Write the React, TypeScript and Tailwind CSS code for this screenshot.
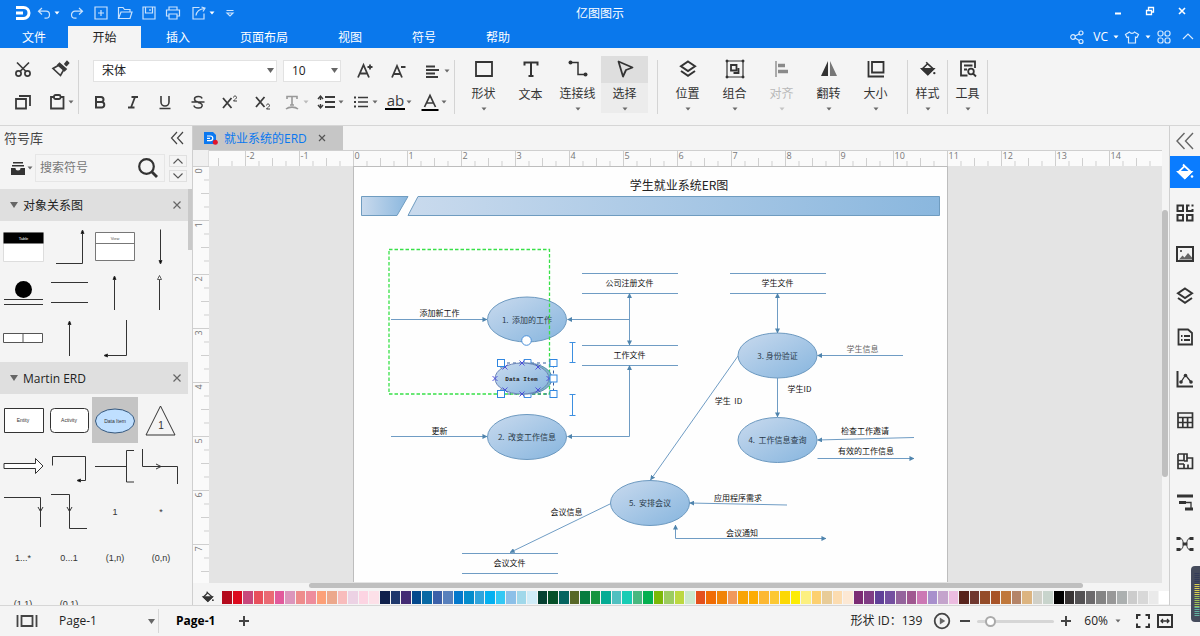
import type { ReactNode } from 'react';

type IconProps = { children: ReactNode; size?: string; sw?: number; box?: string };

function Icon({ children, size = 'size-5', sw = 2, box = '0 0 20 20' }: IconProps) {
  return (
    <svg
      viewBox={box}
      className={`${size} shrink-0`}
      fill="none"
      stroke="currentColor"
      strokeWidth={sw}
      aria-hidden="true"
    >
      {children}
    </svg>
  );
}

function Caret({ className = 'text-[#6a6a6a]' }: { className?: string }) {
  return (
    <svg viewBox="0 0 8 8" className={`size-2 shrink-0 ${className}`} aria-hidden="true">
      <path d="M1.500 2.500h5L4 5.500z" fill="currentColor" />
    </svg>
  );
}

const Bucket = () => (
  <>
    <path d="M8 2.500l2 2L16 10l-6.200 6L3.500 10l5.500-5.300" strokeWidth="1.800" />
    <path d="M3.500 10H16l-6.200 6z" fill="currentColor" />
    <circle cx="17" cy="14.500" r="1.300" fill="currentColor" stroke="none" />
  </>
);

const Layers = () => (
  <>
    <path d="M10 2.500l7 4.800-7 4.700-7-4.700z" />
    <path d="M3 12l7 4.800 7-4.800" />
  </>
);

/* ---------- Title bar ---------- */

function TitleBar() {
  const btn = 'flex h-6 w-6 items-center justify-center';
  return (
    <div className="grid h-[26px] grid-cols-[1fr_auto_1fr] items-center text-[#c9e2fd]">
      <div className="flex items-center pl-3">
        <svg viewBox="0 0 20 20" className="size-5 text-white" fill="none" stroke="currentColor" strokeWidth="3" aria-label="Edraw" role="img">
          <path d="M4 4.500h7.500a5.500 5.500 0 0 1 0 11H4M4 10h7" />
        </svg>
        <button aria-label="撤销" className="ml-1 flex w-[29px] items-center">
          <Icon size="size-4" sw={1.2} box="0 0 16 16"><path d="M6 3L2.500 6.200 6 9.500M2.500 6.200H10a3.500 3.500 0 0 1 0 7H8.500" /></Icon>
          <Caret className="ml-px text-white" />
        </button>
        <button aria-label="恢复" className={btn}>
          <Icon size="size-4" sw={1.2} box="0 0 16 16"><path d="M10 3l3.500 3.200L10 9.500M13.500 6.200H6a3.500 3.500 0 0 0 0 7h1.500" /></Icon>
        </button>
        <button aria-label="新建" className={btn}>
          <Icon size="size-4" sw={1.2} box="0 0 16 16"><path d="M2 2h12v12H2zM8 5v6M5 8h6" /></Icon>
        </button>
        <button aria-label="打开" className={btn}>
          <Icon size="size-4" sw={1.2} box="0 0 16 16"><path d="M1.500 13.500v-11h4.500l1.500 2h5.500v2.500M1.500 13.500L4 7h11l-2 6.500z" /></Icon>
        </button>
        <button aria-label="保存" className={btn}>
          <Icon size="size-4" sw={1.2} box="0 0 16 16"><path d="M2 2h12v12H2zM4.500 2v6h7V2M9 4v2" /></Icon>
        </button>
        <button aria-label="打印" className={btn}>
          <Icon size="size-4" sw={1.2} box="0 0 16 16"><path d="M4 5V2h8v3M4 11H1.500V5h13v6H12M4 9h8v5H4z" /></Icon>
        </button>
        <button aria-label="导出" className="ml-1.5 flex w-[31px] items-center">
          <Icon size="size-4" sw={1.2} box="0 0 16 16"><path d="M8.500 2.500H2v11.500h11V8.500M5 10.500c.5-4 3.500-6.500 8.500-7M10.500 2l3.500 1.200-2 3.300" /></Icon>
          <Caret className="ml-px text-white" />
        </button>
        <button aria-label="自定义快速访问" className="flex w-4 justify-center">
          <Icon size="size-3" sw={1.2} box="0 0 12 12"><path d="M2.500 3.500h7M3 6h6L6 9z" /></Icon>
        </button>
      </div>
      <h1 className="pt-px text-xs text-white">亿图图示</h1>
      <div className="flex h-[22px] items-center justify-end gap-4 self-start pr-2.5 text-white">
        <button aria-label="最小化" className="flex w-4 justify-center"><Icon size="size-3" sw={2} box="0 0 12 12"><path d="M3 8.500h6" /></Icon></button>
        <button aria-label="还原" className="flex w-4 justify-center"><Icon size="size-3" sw={1.3} box="0 0 12 12"><path d="M2.500 5.500h5v4h-5zM4.500 5V2.500h5v4.500H8" /></Icon></button>
        <button aria-label="关闭" className="flex w-4 justify-center"><Icon size="size-3" sw={1.6} box="0 0 12 12"><path d="M3 3l6 6M9 3L3 9" /></Icon></button>
      </div>
    </div>
  );
}

const menus = ['插入', '页面布局', '视图', '符号', '帮助'];

function MenuTabs() {
  return (
    <nav className="flex h-[22px] items-stretch justify-between text-xs text-white">
      <div className="flex">
        <button className="w-[68px] pt-px">文件</button>
        <button className="w-[73px] bg-[#f4f4f4] pt-px text-[#222]">开始</button>
        {menus.map((m) => (
          <button key={m} className="px-[25px] pt-px">{m}</button>
        ))}
      </div>
      <div className="flex items-center pr-1 text-[#d9ebfe]">
        <button aria-label="分享">
          <Icon size="size-4" sw={1.2} box="0 0 16 16">
            <circle cx="4" cy="8" r="2.300" /><circle cx="12" cy="4" r="2" /><circle cx="12" cy="12.500" r="2" />
            <path d="M6 7l4.200-2M6 9l4.200 2.500" />
          </Icon>
        </button>
        <button className="ml-2 flex items-center gap-1 text-xs text-white">VC<Caret className="text-white" /></button>
        <button aria-label="主题" className="ml-1 flex items-center">
          <Icon size="size-4" sw={1.2} box="0 0 16 16"><path d="M5.500 3L1.500 5.500 3 8.500l1.500-.5v6h7V8l1.500.5 1.500-3-4-2.500c-1 1.800-4 1.800-5 0z" /></Icon>
          <Caret className="ml-1 text-white" />
        </button>
        <button aria-label="应用" className="ml-1">
          <Icon size="size-4" sw={1.2} box="0 0 16 16">
            <rect x="2" y="2" width="5" height="5" rx="2" /><rect x="9" y="2" width="5" height="5" rx="2" />
            <rect x="2" y="9" width="5" height="5" rx="2" /><rect x="9" y="9" width="5" height="5" rx="2" />
          </Icon>
        </button>
        <button aria-label="收起功能区" className="ml-2"><Icon size="size-4" sw={1.2} box="0 0 16 16"><path d="M3 10l5-5 5 5" /></Icon></button>
      </div>
    </nav>
  );
}

/* ---------- Ribbon ---------- */

function Divider() {
  return <div className="mt-3 h-[54px] w-px shrink-0 bg-[#d4d4d4]" />;
}

function BigButton({ label, icon, active, muted, noCaret, narrow }: {
  label: string; icon: ReactNode; active?: boolean; muted?: boolean; noCaret?: boolean; narrow?: boolean;
}) {
  return (
    <button
      className={`mt-2 flex h-[57px] flex-col items-center ${narrow ? 'w-[39px]' : 'w-[47px]'} ${active ? 'bg-[#ececec]' : ''} ${muted ? 'text-[#b8b8b8]' : 'text-[#333]'}`}
    >
      <span className={`flex h-7 w-full items-center justify-center pb-0.5 ${active ? 'bg-[#dedede]' : ''}`}>{icon}</span>
      <span className="text-xs leading-[22px]">{label}</span>
      {!noCaret && <Caret className={muted ? 'text-[#c4c4c4]' : 'text-[#6a6a6a]'} />}
    </button>
  );
}

function FontGroup() {
  const fmt = 'flex flex-1 items-center justify-center';
  return (
    <div className="w-[375px] shrink-0 pt-[7px] text-[#3a3a3a]">
      <div className="flex h-[31px] items-center pl-[14px]">
        <span className="relative flex">
          <select aria-label="字体" defaultValue="宋体" className="h-[22px] w-[184px] appearance-none border border-[#e2e2e2] bg-white pl-2 text-xs text-[#222]">
            <option>宋体</option>
          </select>
          <svg viewBox="0 0 8 6" className="pointer-events-none absolute top-2 right-0.5 h-1.5 w-2"><path d="M0 0h7L3.500 5z" fill="#666" /></svg>
        </span>
        <span className="relative ml-1.5 flex">
          <select aria-label="字号" defaultValue="10" className="h-[22px] w-[58px] appearance-none border border-[#e2e2e2] bg-white pl-2 text-xs text-[#222]">
            <option>10</option>
          </select>
          <svg viewBox="0 0 8 6" className="pointer-events-none absolute top-2 right-0.5 h-1.5 w-2"><path d="M0 0h7L3.500 5z" fill="#666" /></svg>
        </span>
        <button aria-label="增大字号" className="ml-2 flex w-8 justify-center">
          <Icon sw={1.8}><path d="M3 16.500L8.500 4 14 16.500M5 12.500h7M12.500 6h5M15 3.500v5" /></Icon>
        </button>
        <button aria-label="减小字号" className="flex w-[34px] justify-center">
          <Icon sw={1.8}><path d="M4 16.500L9 5l5 11.500M6 13h6M13 6h4.500" /></Icon>
        </button>
        <button aria-label="对齐方式" className="flex w-[36px] items-center justify-end">
          <Icon><path d="M3 5.500h9M3 9h13M3 12.500h9M3 16h12" strokeWidth="1.800" /></Icon><Caret />
        </button>
      </div>
      <div className="flex h-[31px] pl-[5px]">
        <div className="flex w-[195px]">
          <button aria-label="粗体" className={fmt}><Icon><path d="M6 5h5a2.500 2.500 0 0 1 0 5H6zM6 10h6a2.800 2.800 0 0 1 0 5.500H6z" /></Icon></button>
          <button aria-label="斜体" className={fmt}><Icon sw={1.8}><path d="M8.500 5H15M5 15.500h6.500M12 5L8 15.500" /></Icon></button>
          <button aria-label="下划线" className={fmt}><Icon sw={1.6}><path d="M6 4v6a4 4 0 0 0 8 0V4M4.500 16.500h11" /></Icon></button>
          <button aria-label="删除线" className={fmt}><Icon sw={1.5}><path d="M14 6.500C13.500 3.800 6.500 3.800 6.500 7c0 1.500 1 2.500 3.500 3M10 10.500c7 1.500 4 6 0 5.500-2.500 0-3.800-1-4-2.500M3.500 10h13" /></Icon></button>
          <button aria-label="上标" className={fmt}><Icon sw={1.8}><path d="M3 6l8.500 10M11.500 6L3 16" /><path d="M13.500 5.500c0-2 3-2 3 0 0 1.200-2 2-3 3.500h3.500" strokeWidth="1" /></Icon></button>
          <button aria-label="下标" className={fmt}><Icon sw={1.8}><path d="M3 5l8.500 10M11.500 5L3 15" /><path d="M13.500 13.500c0-2 3-2 3 0 0 1.200-2 2-3 3.500h3.500" strokeWidth="1" /></Icon></button>
        </div>
        <div className="flex w-[172px]">
          <button aria-label="文字效果" className={`${fmt} text-[#999]`}><Icon sw={1.6}><path d="M5 7V4.500h10V7M10 4.500v8.500M8 13h4M4 17c3-2.500 9-2.500 12 0" /></Icon><Caret className="text-[#bbb]" /></button>
          <button aria-label="行距" className={fmt}><Icon><path d="M8 5h10M8 10h10M8 15h10" strokeWidth="1.800" /><path d="M3.500 5v3M3.500 12v3M1 7l2.500-3L6 7M1 13l2.500 3L6 13" strokeWidth="1.400" /></Icon><Caret /></button>
          <button aria-label="项目符号" className={fmt}><Icon><path d="M7 5.500h10M7 10h10M7 14.500h10" strokeWidth="1.700" /><path d="M3 5.500h2M3 10h2M3 14.500h2" strokeWidth="2" /></Icon><Caret /></button>
          <button aria-label="突出显示" className={fmt}>
            <span className="flex w-5 flex-col items-center border-b-2 border-black text-[15px] leading-[15px]">ab</span><Caret />
          </button>
          <button aria-label="字体颜色" className={fmt}><Icon sw={1.7}><path d="M4.500 15L10 3.500 15.500 15M6.500 11h7" /><path d="M1.500 18h17" stroke="#000" strokeWidth="2" /></Icon><Caret /></button>
        </div>
      </div>
    </div>
  );
}

function Ribbon() {
  return (
    <div className="flex h-[78px] shrink-0 border-b border-[#d6d6d6] bg-[#f4f4f4]">
      <div className="w-[78px] shrink-0 pt-[7px] pl-[13px] text-[#3a3a3a]">
        <div className="flex h-[31px] items-center gap-[17px] pb-1">
          <button aria-label="剪切"><Icon sw={1.7}><circle cx="5.500" cy="14.500" r="2.600" /><circle cx="14.500" cy="14.500" r="2.600" /><path d="M4 3.500l9 9M16 3.500l-9 9" /></Icon></button>
          <button aria-label="格式刷">
            <Icon sw={1.7}><path d="M10 5.500L3 9.500l7.500 7 4-7z" /><path d="M9.500 4.500L16 10l-1.500 1.500L8 6zM14.500 5.500l2.500-3 1.500 1.500-2.500 3" fill="currentColor" /></Icon>
          </button>
        </div>
        <div className="flex h-[31px] items-center gap-[14px]">
          <button aria-label="复制"><Icon sw={1.8}><path d="M3 7h10v9.500H3zM6 4h11v10" /></Icon></button>
          <button aria-label="粘贴" className="flex items-center"><Icon sw={1.8}><path d="M7 5H4v11.500h12.500V5H14" /><rect x="7" y="3" width="6.500" height="4" rx="1.500" /></Icon><Caret /></button>
        </div>
      </div>
      <Divider />
      <FontGroup />
      <Divider />
      <div className="flex px-[5px]">
        <BigButton label="形状" icon={<Icon sw={1.8}><path d="M2 3h16v14H2z" /></Icon>} />
        <BigButton label="文本" noCaret icon={<Icon sw={2}><path d="M3.500 6.500V3.500h13v3M10 3.500V17M7.500 17h5" /></Icon>} />
        <BigButton label="连接线" icon={<Icon sw={1.5}><path d="M3 3.500h7v12h7" /><circle cx="2.500" cy="3.500" r="2" fill="currentColor" stroke="none" /><circle cx="17.500" cy="15.500" r="2" fill="currentColor" stroke="none" /></Icon>} />
        <BigButton label="选择" active icon={<Icon sw={1.8}><path d="M3.500 2.500L17.500 8.500 11 11 8 17.500z" strokeLinejoin="round" /></Icon>} />
      </div>
      <div className="w-1" />
      <Divider />
      <div className="flex pr-2 pl-[6px]">
        <BigButton label="位置" icon={<Icon><Layers /></Icon>} />
        <BigButton label="组合" icon={<Icon sw={1.2}><path d="M2 2h16v16H2z" /><path d="M6 6h5.500v5.500H6zM13.500 9v5h-5" strokeWidth="1.800" /><path d="M1 1h2v2H1zM17 1h2v2h-2zM1 17h2v2H1zM17 17h2v2h-2z" fill="currentColor" strokeWidth=".6" /></Icon>} />
        <BigButton label="对齐" muted icon={<Icon><path d="M4 2v16" stroke="#999" strokeWidth="1.600" /><path d="M6 6.500h7M6 12.500h10" stroke="#8a8a8a" strokeWidth="3.500" /></Icon>} />
        <BigButton label="翻转" icon={<Icon><path d="M9 2v15H2z" fill="#333" stroke="none" /><path d="M11 2v15h7z" fill="#777" stroke="none" /></Icon>} />
        <BigButton label="大小" icon={<Icon sw={1.8}><path d="M6 3h11.500v10.500H6zM2.500 2v15.500H18" /></Icon>} />
      </div>
      <Divider />
      <BigButton label="样式" narrow icon={<Icon size="size-[18px]"><Bucket /></Icon>} />
      <Divider />
      <BigButton label="工具" narrow icon={<Icon sw={1.8}><path d="M9.500 16.500H3V2.500h14V9M6 6.500h8.500M6 10.500h3" /><circle cx="13" cy="12.500" r="2.800" /><path d="M15 14.500l3 3" /></Icon>} />
      <Divider />
    </div>
  );
}

/* ---------- Symbol library ---------- */

function Cell({ children, active }: { children: ReactNode; active?: boolean }) {
  return (
    <button className={`size-[46px] ${active ? 'bg-[#c4c4c4]' : ''}`}>
      <svg viewBox="0 0 46 46" className="size-full font-['Liberation_Sans',sans-serif]" fill="none" stroke="#333" strokeWidth="1">
        {children}
      </svg>
    </button>
  );
}

function CellText({ children, y = 26, size = 9 }: { children: string; y?: number; size?: number }) {
  return <text x="23" y={y} fontSize={size} fill="#333" stroke="none" textAnchor="middle">{children}</text>;
}

function SectionHeader({ title }: { title: string }) {
  return (
    <div className="flex h-8 shrink-0 items-center bg-[#dfdfdf] pr-[5px] pl-2.5 text-[#222]">
      <svg viewBox="0 0 8 6" className="h-1.5 w-2"><path d="M0 0h8L4 6z" fill="#666" /></svg>
      <h3 className="ml-[5px] flex-1 pt-px text-xs">{title}</h3>
      <button aria-label={`关闭 ${title}`} className="text-[#666]"><Icon size="size-3" sw={1.2} box="0 0 12 12"><path d="M2.500 2.500l7 7M9.500 2.500l-7 7" /></Icon></button>
    </div>
  );
}

const labels = ['1...*', '0...1', '(1,n)', '(0,n)', '(1,1)', '(0,1)'];

function SymbolPanel() {
  return (
    <aside className="flex w-[193px] shrink-0 flex-col overflow-hidden border-r border-[#cfcfcf] bg-[#f4f4f4]">
      <div className="flex h-6 shrink-0 items-center justify-between pr-2 pl-1 text-[#444]">
        <h2 className="pt-px text-[13px]">符号库</h2>
        <button aria-label="折叠"><Icon size="size-3.5" sw={1.2} box="0 0 14 14"><path d="M7 1L1.500 7 7 13M13 1L7.500 7 13 13" /></Icon></button>
      </div>
      <div className="mt-1 mb-[7px] flex h-7 shrink-0 items-center pl-2.5">
        <button aria-label="符号库菜单" className="flex items-center text-[#333]">
          <svg viewBox="0 0 16 16" className="size-4" fill="currentColor"><path d="M3 2h10v1.500H3zM2 5h12v1.500H2zM1 8h4.500a2.500 2.500 0 0 0 5 0H15v7H1z" /></svg>
          <Caret />
        </button>
        <div className="ml-px flex h-7 w-[130px] items-center border border-[#e6e6e6]">
          <input aria-label="搜索符号" placeholder="搜索符号" className="w-0 flex-1 bg-transparent pl-1 text-xs outline-none placeholder:text-[#777]" />
          <button aria-label="搜索" className="mr-[5px] text-[#333]"><Icon size="size-[22px]" box="0 0 22 22"><circle cx="9.500" cy="9.500" r="7.300" strokeWidth="2.200" /><path d="M15 15l5 5" strokeWidth="2.800" /></Icon></button>
        </div>
        <div className="ml-1 flex flex-col gap-[3px] text-[#555]">
          <button aria-label="上一个" className="flex h-3 w-[18px] items-center justify-center border border-[#e0e0e0]"><Icon size="size-3" sw={1.1} box="0 0 12 12"><path d="M1.500 8.500L6 4l4.500 4.500" /></Icon></button>
          <button aria-label="下一个" className="flex h-3 w-[18px] items-center justify-center border border-[#e0e0e0]"><Icon size="size-3" sw={1.1} box="0 0 12 12"><path d="M1.500 3.500L6 8l4.500-4.500" /></Icon></button>
        </div>
      </div>
      <div className="flex min-h-0 flex-1">
        <div className="min-w-0 flex-1 overflow-hidden">
          <SectionHeader title="对象关系图" />
          <div className="grid grid-cols-[repeat(4,46px)] pt-0.5 pb-px">
            <Cell><path d="M3.500 9.500h40v29h-40z" fill="#fff" stroke="#ddd" /><path d="M3.500 9.500h40v11h-40z" fill="#000" stroke="none" /><text x="23.500" y="17" fontSize="4" fill="#fff" stroke="none" textAnchor="middle">Table</text></Cell>
            <Cell><path d="M10 40.500h26.500V9" /><path d="M35 10.500l1.500-3.500 1.500 3.500z" fill="#000" /></Cell>
            <Cell><path d="M3.500 9.500h39v28h-39zM3.500 20.500h39" fill="#fff" stroke="#777" /><text x="23" y="17" fontSize="4" fill="#555" stroke="none" textAnchor="middle">View</text></Cell>
            <Cell><path d="M22.500 6.500V40" /><path d="M21 37.500l1.500 3.500 1.500-3.500z" fill="#000" /></Cell>
            <Cell><circle cx="23.500" cy="20.500" r="8.500" fill="#000" stroke="none" /><path d="M4 30.500h39M4 35.500h39" /></Cell>
            <Cell><path d="M5 13.500h37M5 33.500h37" /></Cell>
            <Cell><path d="M22.500 8v33" /><path d="M21 10.500l1.500-3.500 1.500 3.500z" fill="#000" /></Cell>
            <Cell><path d="M21.500 11v30" /><path d="M19.500 10.500l2-4 2 4z" fill="#fff" strokeWidth=".8" /></Cell>
            <Cell><path d="M3.500 18.500h39v9h-39zM23 18.500v9" fill="#fff" stroke="#555" /></Cell>
            <Cell><path d="M23.500 7v34" /><path d="M22 9.500l1.500-3.500 1.500 3.500z" fill="#000" /></Cell>
            <Cell><path d="M34.500 5v35.500H14" /><path d="M15.500 39l-3.500 1.500 3.500 1.500z" fill="#000" /></Cell>
          </div>
          <SectionHeader title="Martin ERD" />
          <div className="grid grid-cols-[repeat(4,46px)] pt-[3px]">
            <Cell><path d="M4.500 11.500h39v24h-39z" fill="#fff" /><CellText size={5} y={25}>Entity</CellText></Cell>
            <Cell><rect x="4.500" y="11.500" width="38" height="24" rx="4" fill="#fff" /><CellText size={5} y={25}>Activity</CellText></Cell>
            <Cell active><ellipse cx="23" cy="24" rx="19.500" ry="12" fill="#bfdfff" stroke="#35577c" /><CellText size={5}>Data Item</CellText></Cell>
            <Cell><path d="M22.500 9L37 38H8z" /><CellText y={32} size={10}>1</CellText></Cell>
            <Cell><path d="M4 20.500h31.500v-5L43 23l-7.500 7.500v-5H4z" fill="#fff" /></Cell>
            <Cell><path d="M6.500 22.500v-9h33v24H34" /><path d="M34.500 36l-3.500 1.500 3.500 1.500z" fill="#000" /></Cell>
            <Cell><path d="M3 23.500h31M42 7.500h-7.500v31.500H42" /></Cell>
            <Cell><path d="M4.500 6v17.500h35V41M18 21l5 2.500-5 2.500" /></Cell>
            <Cell><path d="M4 8.500h36.500V38M38 18l2.500 4.500L43 18" /></Cell>
            <Cell><path d="M5 5.500h18.500v34H41M21 18l2.500 4.500L26 18" /></Cell>
            <Cell><CellText>1</CellText></Cell>
            <Cell><CellText>*</CellText></Cell>
            {labels.map((t) => <Cell key={t}><CellText>{t}</CellText></Cell>)}
          </div>
        </div>
        <div className="w-1 shrink-0"><div className="h-[61px] w-full bg-[#c9c9c9]" /></div>
      </div>
    </aside>
  );
}

/* ---------- Rulers ---------- */

const UNIT = 54;

function HorizontalRuler() {
  const majors = Array.from({ length: 18 }, (_, i) => i - 3);
  return (
    <svg className="h-4 w-full bg-[#fafafa] font-['Open_Sans',sans-serif]" stroke="#cfcfcf" aria-hidden="true">
      <path d="M0 .5h2000" />
      {majors.map((n) => {
        const x = 144.5 + n * UNIT;
        return (
          <g key={n}>
            <path d={`M${x} 0v16M${x + 13.5} 11v5M${x + 27} 8v8M${x + 40.5} 11v5`} />
            {x > 0 && <text x={x + 1} y="9" fontSize="9" fill="#777" stroke="none">{n}</text>}
          </g>
        );
      })}
    </svg>
  );
}

function VerticalRuler() {
  const majors = Array.from({ length: 8 }, (_, i) => i);
  return (
    <svg className="h-full w-4 bg-[#fafafa] font-['Open_Sans',sans-serif]" stroke="#cfcfcf" aria-hidden="true">
      {majors.map((n) => {
        const y = 0.5 + n * UNIT;
        return (
          <g key={n}>
            <path d={`M0 ${y}h16M11 ${y + 13.5}h5M8 ${y + 27}h8M11 ${y + 40.5}h5`} />
            <text transform={`translate(9 ${y + 7}) rotate(-90)`} fontSize="9" fill="#777" stroke="none">{n}</text>
          </g>
        );
      })}
    </svg>
  );
}

/* ---------- Diagram ---------- */

const processes = [
  { x: 527, y: 319.5, text: '1.  添加的工作' },
  { x: 527, y: 437, text: '2.  改变工作信息' },
  { x: 777.5, y: 355.5, text: '3. 身份验证' },
  { x: 777.5, y: 440, text: '4.  工作信息查询' },
  { x: 650, y: 503, text: '5.  安排会议' },
];

const stores = [
  { x: 582, y: 273.5, text: '公司注册文件' },
  { x: 582, y: 345.5, text: '工作文件' },
  { x: 730, y: 273.5, text: '学生文件' },
  { x: 462, y: 553.5, text: '会议文件' },
];

const flows = [
  { d: 'M391 319.500H487' },
  { d: 'M629.500 319.500H567.500' },
  { d: 'M629.500 293.500V345', both: true },
  { d: 'M391 436.500H487' },
  { d: 'M777.500 293.500V333', both: true },
  { d: 'M903 355.500H817.500' },
  { d: 'M777.500 378V417' },
  { d: 'M738 356L650.500 480' },
  { d: 'M914 437.500L817.500 440' },
  { d: 'M817.500 458.500H914' },
  { d: 'M787 505L689.500 503' },
  { d: 'M611 503.500L510 552.500' },
  { d: 'M629.500 365.500V436.500H567.500', both: true },
  { d: 'M675.500 525V538.500H826', both: true },
];

const captions = [
  { x: 439.5, y: 313, text: '添加新工作' },
  { x: 439.5, y: 430.5, text: '更新' },
  { x: 862.5, y: 349, text: '学生信息', fill: '#666' },
  { x: 799.5, y: 388.5, text: '学生ID' },
  { x: 728.5, y: 400.5, text: '学生  ID' },
  { x: 865, y: 431, text: '检查工作邀请' },
  { x: 866, y: 451, text: '有效的工作信息' },
  { x: 738, y: 498, text: '应用程序需求' },
  { x: 742, y: 532.5, text: '会议通知' },
  { x: 566.5, y: 512, text: '会议信息' },
];

const crosses = [[522, 363], [505, 367], [538, 367], [495, 378.5], [549, 378.5], [505, 390], [538, 390], [522, 394]];
const handles = [[501, 363], [553.5, 363], [553.5, 378.5], [501, 394], [553.5, 394]];

function Diagram() {
  return (
    <svg
      viewBox="354 167 593 415"
      width="593"
      height="415"
      role="img"
      aria-label="学生就业系统ER图"
      className="block shrink-0 font-['Noto_Sans_CJK_SC',sans-serif]"
      fill="none"
    >
      <defs>
        <linearGradient id="bar" x1="0" x2="1"><stop offset="0" stopColor="#c9daed" /><stop offset="1" stopColor="#8ab7de" /></linearGradient>
        <linearGradient id="node" x1="0" y1="0" x2="1" y2="1"><stop offset="0" stopColor="#c9daee" /><stop offset="1" stopColor="#86b5de" /></linearGradient>
        <marker id="arrow" viewBox="0 0 6 6" refX="5.500" refY="3" markerWidth="5" markerHeight="5" markerUnits="userSpaceOnUse" orient="auto-start-reverse">
          <path d="M0 0l6 3-6 3z" fill="#4f84ad" />
        </marker>
      </defs>
      <text x="679" y="189.500" fontSize="12" fill="#222" textAnchor="middle">学生就业系统ER图</text>
      <path d="M361.500 196.500H408L397 215.500H361.500z" fill="url(#bar)" stroke="#6f9cc0" />
      <path d="M418 196.500H939.500V215.500H408z" fill="url(#bar)" stroke="#6f9cc0" />

      {stores.map((s) => (
        <g key={s.text}>
          <path d={`M${s.x} ${s.y}h96m-96 20h96`} stroke="#6f9cc4" />
          <text x={s.x + 47.5} y={s.y + 12.5} fontSize="8" fill="#111" textAnchor="middle">{s.text}</text>
        </g>
      ))}
      {processes.map((p) => (
        <g key={p.text}>
          <ellipse cx={p.x} cy={p.y} rx="39.500" ry="22.500" fill="url(#node)" stroke="#6c99c0" />
          <text x={p.x} y={p.y + 3} fontSize="8" fill="#2a3a4a" textAnchor="middle" className="whitespace-pre">{p.text}</text>
        </g>
      ))}
      {flows.map((f) => (
        <path key={f.d} d={f.d} stroke="#6f9cc4" markerEnd="url(#arrow)" markerStart={f.both ? 'url(#arrow)' : undefined} />
      ))}
      {captions.map((c) => (
        <text key={c.text} x={c.x} y={c.y + 3} fontSize="8" fill={c.fill ?? '#111'} textAnchor="middle" className="whitespace-pre">{c.text}</text>
      ))}

      <path d="M389 249.500H549.500V394H389z" stroke="#38e048" strokeWidth="1.300" strokeDasharray="3.500 2" />
      <path d="M501 363h52.500v31H501z" stroke="#335c9e" strokeDasharray="3 3" />
      <g fill="#fff" stroke="#3b8be0"><path d="M524 359.500h7v7h-7zM524 390.500h7v7h-7z" /></g>
      <ellipse cx="526.500" cy="378.500" rx="25.500" ry="15.500" fill="#7cbbc4" stroke="#5b87b0" />
      <ellipse cx="522" cy="378.500" rx="27" ry="15.500" fill="url(#node)" stroke="#6c84b8" />
      <text x="521.500" y="380.500" fontSize="6" fontWeight="700" fill="#222" textAnchor="middle" className="font-['Liberation_Mono',monospace]">Data Item</text>
      {crosses.map(([x, y]) => (
        <path key={`${x}-${y}`} d={`M${x - 2.5} ${y - 2.5}l5 5m0-5l-5 5`} stroke="#4646d8" strokeWidth=".9" />
      ))}
      {handles.map(([x, y]) => (
        <rect key={`${x}-${y}`} x={x - 3.5} y={y - 3.5} width="7" height="7" fill="#fff" stroke="#2f86e0" />
      ))}
      <circle cx="526.500" cy="340.500" r="4.800" fill="#fff" stroke="#4a90d9" />
      <path d="M569.500 342.500h6m-3 0v20m-3 0h6M569.500 394.500h6m-3 0v21m-3 0h6" stroke="#3d8fe0" />
    </svg>
  );
}

/* ---------- Palette ---------- */

const palette = [
  '#b40a1c', '#dc0a1e', '#c8487c', '#e8505c', '#ea6a74', '#e25a9c', '#dc96bc', '#ee8c8c', '#ee8c9c', '#fca078', '#eca88c', '#f8bcbc', '#ecd2e4', '#fcd4e2', '#fce0e8',
  '#10204c', '#20386c', '#442c74', '#04488c', '#0868a4', '#3c60a8', '#5880bc', '#0478cc', '#048ccc', '#30a4dc', '#04b0f0', '#34c8f4', '#8cc0e8', '#a0d8ea', '#d0ecf8',
  '#044030', '#045028', '#046460', '#586828', '#087c40', '#189440', '#04ac94', '#50c0c0', '#18ccb4', '#48b880', '#04b050', '#7cb808', '#9ccc60', '#bcd840', '#cce8cc',
  '#e4501c', '#f06c04', '#f08408', '#f0985c', '#f8a404', '#fcac04', '#fcb834', '#fcc834', '#fcd804', '#fcec04', '#fcf080', '#fcd070', '#e8cc98', '#fcdcb0', '#fce8d4',
  '#7c2c74', '#803c84', '#604098', '#7450a0', '#94649c', '#a05890', '#cc78b4', '#a890cc', '#c4a4cc', '#ecbce0',
  '#58241c', '#703830', '#944c28', '#a85428', '#c0783c', '#b48468', '#dcb480', '#d0d0c8', '#c8d4cc',
  '#000000', '#383434', '#545254', '#6c6a6c', '#848484', '#989898', '#acb0b0', '#cccccc', '#d8d8d8', '#eaeaea', '#ffffff',
];

function Workspace() {
  return (
    <main className="flex min-w-0 flex-1 flex-col bg-[#f4f4f4]">
      <div className="flex h-6 shrink-0">
        <div className="flex w-[150px] items-center bg-[#c6c6c6] pl-[11px]">
          <svg viewBox="0 0 14 14" className="size-3.5" aria-hidden="true">
            <path d="M0 1h9l3 3v9H0z" fill="#0a78f0" /><path d="M3 5h3.500a2.300 2.300 0 0 1 0 4.600H3M3 7.300h3" stroke="#fff" fill="none" strokeWidth="1.200" /><circle cx="11.300" cy="11.300" r="2.500" fill="#e0142c" />
          </svg>
          <a href="#doc" className="ml-[6px] flex-1 pt-px text-xs whitespace-nowrap text-[#0a78f0]">就业系统的ERD</a>
          <button aria-label="关闭文档" className="mr-[15px] text-[#555]"><Icon size="size-3" sw={1.2} box="0 0 12 12"><path d="M3 3l6 6M9 3L3 9" /></Icon></button>
        </div>
      </div>
      <div className="flex h-4 shrink-0 pr-[7px]">
        <div className="w-4 shrink-0 border-r border-[#ddd] bg-[#f0f0f0]" />
        <div className="min-w-0 flex-1"><HorizontalRuler /></div>
      </div>
      <div className="flex min-h-0 flex-1">
        <div className="w-4 shrink-0 overflow-hidden"><VerticalRuler /></div>
        <div className="min-w-0 flex-1 overflow-hidden bg-[#e4e4e4] pl-[144px]">
          <div className="w-fit border border-b-0 border-[#bdbdbd] bg-[#fefefe]"><Diagram /></div>
        </div>
        <div className="w-[7px] shrink-0 pt-11"><div className="h-[267px] w-1.5 rounded-sm bg-[#bfbfbf]" /></div>
      </div>
      <div className="h-1.5 shrink-0 pr-[86px] pl-[116px]"><div className="h-[5px] rounded-sm bg-[#bfbfbf]" /></div>
      <div className="flex h-4 shrink-0 items-center">
        <button aria-label="填充颜色" className="mr-[7px] ml-2 text-[#333]"><Icon size="size-3.5"><Bucket /></Icon></button>
        <div className="flex h-[13px] flex-1 gap-px">
          {palette.map((c, i) => <button key={i} aria-label={c} className="flex-1" style={{ backgroundColor: c }} />)}
        </div>
      </div>
    </main>
  );
}

/* ---------- Right rail ---------- */

const tools: { label: string; icon: ReactNode }[] = [
  { label: '符号', icon: <><path d="M2.500 2.500h5.500v5.500H2.500zM2.500 12h5.500v5.500H2.500zM12 12h5.500v5.500H12zM17.500 6v2H12V2.500h2.500" /><path d="M16.500 2.500h2" /></> },
  { label: '图片', icon: <><path d="M2 3h16v14H2z" /><path d="M4 15.500l3.500-4 2 2 3.500-4.500 4 4.500v2z" fill="#666" stroke="none" /><circle cx="6" cy="7" r="1" fill="currentColor" stroke="none" /></> },
  { label: '图层', icon: <Layers /> },
  { label: '页面', icon: <path d="M3.500 2.500H13l4 3.500v11.500H3.500zM6 9h1.500M9 9h6M6 13h1.500M9 13h6" strokeWidth="1.800" /> },
  { label: '图表', icon: <><path d="M2.500 2v15.500H18" /><path d="M6 13l4.500-7 5.500 7" strokeWidth="1.300" /><circle cx="6" cy="13" r="1.800" fill="currentColor" stroke="none" /><circle cx="10.500" cy="6.500" r="1.800" fill="currentColor" stroke="none" /><circle cx="16" cy="13" r="1.800" fill="currentColor" stroke="none" /></> },
  { label: '表格', icon: <path d="M3 3h14.500v14.500H3zM3 7.500h14.500M3 12.500h14.500M7.800 8v9.500M12.600 8v9.500" strokeWidth="1.700" /> },
  { label: '平面图', icon: <path d="M3 3h9v4h5.500v10.500H13v-4M3 3v14.500h6V13M3 9.500h6V3M3 13h6M12 7v3H9M13 17.500H9" strokeWidth="1.700" /> },
  { label: '流程', icon: <><path d="M2 3h16M4 9.500h7M10 16h8" strokeWidth="2.800" /><path d="M11 9.500h5V15" strokeWidth="1.300" /></> },
  { label: '脑图', icon: <><path d="M1.500 4.500h4M14.500 4.500h4M1.500 15.500h4M14.500 15.500h4M7.500 10h5" strokeWidth="3.200" /><path d="M5 4.500c4 0 2 5.500 5 5.500s1-5.500 5-5.500M5 15.500c4 0 2-5.500 5-5.500s1 5.500 5 5.500" strokeWidth="1" /></> },
];

function ToolRail() {
  return (
    <aside className="relative flex w-[31px] shrink-0 flex-col border-l border-[#cfcfcf] bg-[#f4f4f4] text-[#333]">
      <button aria-label="展开" className="flex h-[30px] items-center justify-center text-[#666]"><Icon sw={1.4}><path d="M9.500 2L2 10l7.500 8M18 2l-7.500 8 7.500 8" /></Icon></button>
      <button aria-label="样式" className="flex h-8 items-center justify-center bg-[#0a7cff] text-white"><Icon><Bucket /></Icon></button>
      <div className="flex flex-1 flex-col items-center justify-between pt-[15px] pb-[51px]">
        {tools.map((t) => <button key={t.label} aria-label={t.label}><Icon sw={2}>{t.icon}</Icon></button>)}
      </div>
    </aside>
  );
}

/* ---------- Status bar ---------- */

function StatusBar() {
  return (
    <footer className="flex h-[31px] shrink-0 items-center border-t border-[#d6d6d6] bg-[#f4f4f4] text-xs text-[#222]">
      <button aria-label="页面视图" className="ml-4 text-[#444]"><Icon size="size-[22px]" sw={1.8} box="0 0 22 22"><path d="M5.500 6h11v10h-11zM1.500 5v12M20.500 5v12" /></Icon></button>
      <span className="relative ml-[21px] flex border-r border-[#d6d6d6]">
        <select aria-label="页面" defaultValue="Page-1" className="h-6 w-[99px] appearance-none bg-transparent text-xs text-[#222]"><option>Page-1</option></select>
        <svg viewBox="0 0 8 6" className="pointer-events-none absolute top-2.5 right-0.5 h-1.5 w-2"><path d="M0 0h7L3.500 5z" fill="#666" /></svg>
      </span>
      <button className="ml-[17px] text-xs font-bold text-black">Page-1</button>
      <button aria-label="添加页面" className="ml-[22px] text-[#444]"><Icon size="size-3.5" box="0 0 14 14"><path d="M7 2v10M2 7h10" /></Icon></button>
      <div className="flex-1" />
      <span>形状 ID：139</span>
      <button aria-label="演示" className="ml-2.5 text-[#444]"><Icon sw={1.8}><circle cx="10" cy="10" r="7.300" /><path d="M7.800 6.500v7l5.500-3.500z" fill="#666" stroke="none" /></Icon></button>
      <button aria-label="缩小" className="ml-1.5 text-[#444]"><Icon size="size-3.5" box="0 0 14 14"><path d="M2 7h10" /></Icon></button>
      <input
        type="range"
        min="0"
        max="100"
        defaultValue="12"
        aria-label="缩放"
        className="mx-[5px] h-[3px] w-[77px] appearance-none rounded-full bg-[#d6d6d6] [&::-webkit-slider-thumb]:size-[11px] [&::-webkit-slider-thumb]:appearance-none [&::-webkit-slider-thumb]:rounded-full [&::-webkit-slider-thumb]:border-2 [&::-webkit-slider-thumb]:border-[#aaa] [&::-webkit-slider-thumb]:bg-white"
      />
      <button aria-label="放大" className="text-[#444]"><Icon size="size-3.5" box="0 0 14 14"><path d="M7 2v10M2 7h10" /></Icon></button>
      <button className="ml-[11px] flex items-center gap-1.5">60%<Caret /></button>
      <button aria-label="全屏" className="ml-3 text-[#333]"><Icon size="size-[18px]" box="0 0 18 18"><path d="M3 7V3h3.500M11.500 3H15v4M15 11.500V15h-3.500M6.500 15H3v-3.500" /></Icon></button>
      <button aria-label="适应宽度" className="mr-[26px] ml-1 text-[#333]"><Icon size="size-[18px]" box="0 0 18 18"><path d="M2 3h14v12H2z" /><path d="M5 9h8M7 7L5 9l2 2M11 7l2 2-2 2" strokeWidth="1.300" /></Icon></button>
    </footer>
  );
}

function LevelMeter() {
  return (
    <div className="absolute right-0 bottom-3.5 h-14 w-[9px] rounded-l-sm bg-[#454b5c]">
      <svg viewBox="0 0 9 56" className="size-full" strokeDasharray="1 1" strokeWidth="5" aria-hidden="true">
        <path d="M6 7v11" stroke="#333b58" />
        <path d="M6 18v12" stroke="#d8cf52" />
        <path d="M6 30v11" stroke="#9fc058" />
        <path d="M6 41v9" stroke="#62b0a0" />
      </svg>
    </div>
  );
}

export default function App() {
  return (
    <div className="relative flex h-screen flex-col overflow-hidden bg-[#f4f4f4] font-['Open_Sans','Noto_Sans_CJK_SC',sans-serif]">
      <header className="shrink-0 bg-[#0a78ec]">
        <TitleBar />
        <MenuTabs />
      </header>
      <Ribbon />
      <div className="flex min-h-0 flex-1">
        <SymbolPanel />
        <Workspace />
        <ToolRail />
      </div>
      <StatusBar />
      <LevelMeter />
    </div>
  );
}
